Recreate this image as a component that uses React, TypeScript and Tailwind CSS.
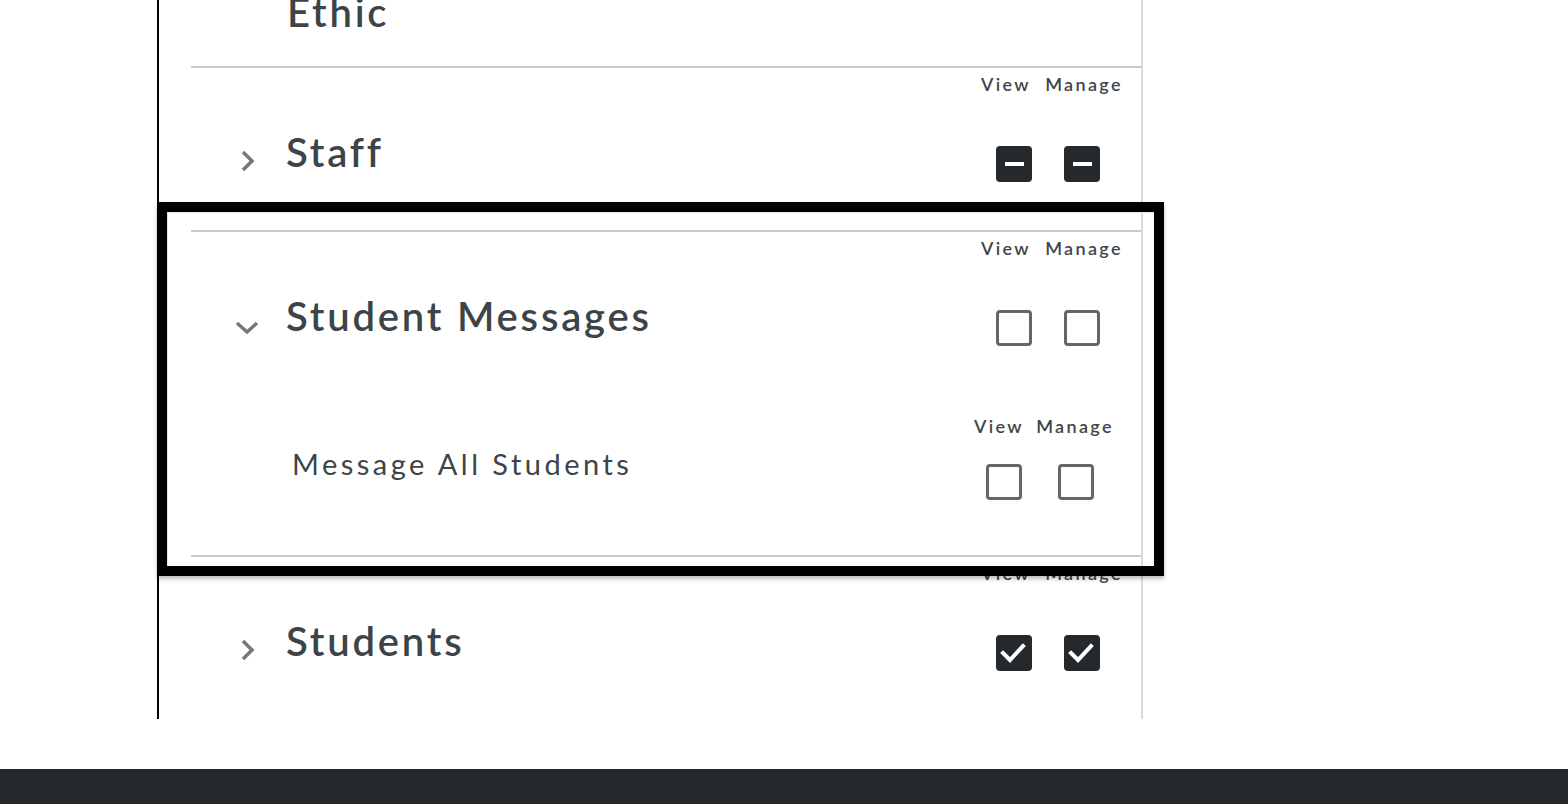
import React from "react";

type BoxState = "checked" | "mixed" | "empty";

function Box({ state }: { state: BoxState }) {
  if (state === "empty") {
    return <div className="h-[36px] w-[36px] rounded-[4px] border-[3px] border-[#666666] bg-white" />;
  }
  return (
    <div className="flex h-[36px] w-[36px] items-center justify-center rounded-[4px] bg-[#25292c]">
      {state === "mixed" ? (
        <div className="h-[4px] w-[19px] bg-white" />
      ) : (
        <svg width="36" height="36" viewBox="0 0 36 36" fill="none">
          <polyline points="7,25 14,32 27,18" transform="translate(0,-7)" stroke="white" strokeWidth="4" strokeLinecap="square" strokeLinejoin="miter" />
        </svg>
      )}
    </div>
  );
}

function Chevron({ open }: { open: boolean }) {
  return (
    <div className="mt-[16px] flex h-[36px] w-[36px] items-center justify-center">
      <svg width="36" height="36" viewBox="0 0 36 36" fill="none">
        {open ? (
          <polyline points="8,15 18,24 28,15" stroke="#777777" strokeWidth="3.5" />
        ) : (
          <polyline points="14,8 23,17 14,26" stroke="#777777" strokeWidth="3.5" />
        )}
      </svg>
    </div>
  );
}

function Labels({ sub }: { sub?: boolean }) {
  return (
    <div
      className={
        sub
          ? "flex h-[32px] items-center justify-end gap-[1px] pr-[22px] text-[18px] font-semibold tracking-[0.13em] text-[#3f4549]"
          : "flex h-[32px] items-center justify-end gap-[3px] pr-[13px] text-[18px] font-semibold tracking-[0.13em] text-[#3f4549]"
      }
    >
      <span className="w-[60px] pl-[2px] text-center">View</span>
      <span className="w-[90px] pl-[2px] text-center">Manage</span>
    </div>
  );
}

function Divider() {
  return <div className="ml-[32px] h-[2px] bg-[#c6cbce]" />;
}

type Section = {
  title: string;
  open: boolean;
  view: BoxState;
  manage: BoxState;
  children?: { title: string; view: BoxState; manage: BoxState }[];
};

const sections: Section[] = [
  { title: "Staff", open: false, view: "mixed", manage: "mixed" },
  {
    title: "Student Messages",
    open: true,
    view: "empty",
    manage: "empty",
    children: [{ title: "Message All Students", view: "empty", manage: "empty" }],
  },
  { title: "Students", open: false, view: "checked", manage: "checked" },
];

function PermissionSection({ s }: { s: Section }) {
  return (
    <div>
      <Divider />
      <Labels />
      <div className="mt-[28px] flex items-start pl-[70px]">
        <Chevron open={s.open} />
        <h3 className="ml-[21px] flex-1 text-[40px] leading-[48px] font-semibold tracking-[0.07em] text-[#3d4448]">
          {s.title}
        </h3>
        <div className="mt-[18px] flex gap-[32px] pr-[41px]">
          <Box state={s.view} />
          <Box state={s.manage} />
        </div>
      </div>
      {s.open && s.children ? (
        s.children.map((c) => (
          <div key={c.title} className="mt-[64px] pb-[55px]">
            <Labels sub />
            <div className="mt-[4px] flex items-start pl-[133px]">
              <span className="flex-1 text-[29px] leading-[36px] tracking-[0.12em] text-[#3d4448]">{c.title}</span>
              <div className="mt-[18px] flex gap-[36px] pr-[47px]">
                <Box state={c.view} />
                <Box state={c.manage} />
              </div>
            </div>
          </div>
        ))
      ) : (
        <div className="h-[48px]" />
      )}
    </div>
  );
}

export default function App() {
  return (
    <div className="relative h-[804px] w-full overflow-hidden bg-white font-['Lato',sans-serif]">
      <div className="ml-[157px] h-[719px] w-[986px] overflow-hidden border-l-2 border-r-2 border-l-black border-r-[#d9d9d9]">
        <div className="flex h-[66px] flex-col pl-[128px]">
          <h3 className="-mt-[12px] text-[40px] leading-[48px] font-semibold tracking-[0.07em] text-[#3d4448]">Ethic</h3>
        </div>
        {sections.map((s) => (
          <PermissionSection key={s.title} s={s} />
        ))}
      </div>
      <div className="mt-[50px] h-[35px] bg-[#25292c]" />
      <div className="absolute left-[157px] top-[202px] h-[374px] w-[1007px] border-[10px] border-black shadow-[0_3px_4px_rgba(0,0,0,0.25),inset_1px_1px_0_#e5e5e5]" />
    </div>
  );
}
